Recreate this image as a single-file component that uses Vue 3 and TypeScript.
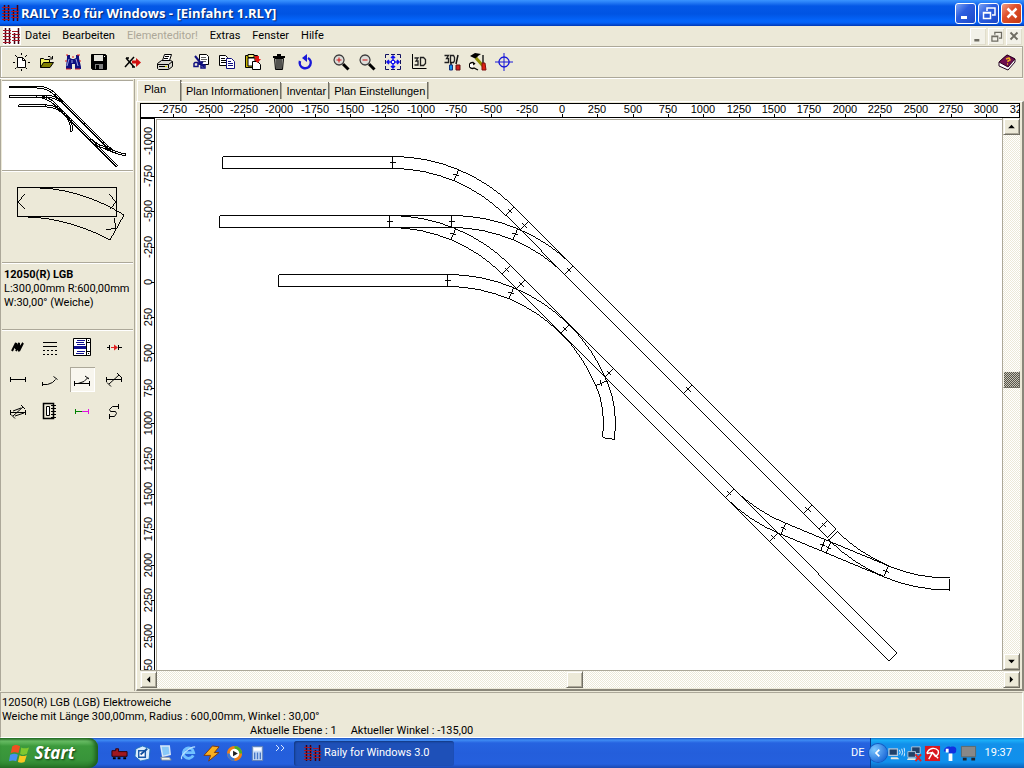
<script setup lang="ts">
import { h, ref } from 'vue'

type Shape = [d: string, fill: string, stroke?: string, width?: number]

const K = '#000000'
const N = 'none'

const glyphs: Record<string, Shape[]> = {
  rails: [
    ['M2.500 1v16M6.500 1v16M11.500 6v11M15.500 1v16', N, '#400010', 1.5],
    ['M0 3.500h8M0 6.500h8M0 9.500h8M0 12.500h8M0 15.500h8M9 7.500h8M9 10.500h8M9 13.500h8M9 4.500h6', N, '#a81828', 1],
  ],
  fresh: [
    ['M5.5 4.5h5l3 3v7h-8z', '#ffffff', K, 1],
    ['M10.5 4.5v3h3', N, K, 1],
    ['M9.5 0v2M3 2l2 2M15 2l-2 2M1 9.5h2M16 9.5h2M3 16l1.500 -1.500M15 16l-1 -1M9.500 16v2', N, K, 1],
  ],
  open: [
    ['M2.5 14.500v-9h3l1 1h5v3', '#f0f060', K, 1],
    ['M2.500 14.500l3 -5h10l-3.500 5z', '#808000', K, 1],
    ['M10 3.500h2l2 2M14.500 3v3h-3', N, K, 1],
  ],
  binoculars: [
    ['M3 2h3v3l2 1h2l2 -1v-3h3v3l2 9v2h-6v-5h-3v5h-6v-2l1 -9z', '#101080'],
    ['M2 2h2M13 2h3M1 8h2M15 8h2M2 16h5M11 16h5M8 4h2', N, '#e02020', 1],
    ['M5 6l-2 7M12 6l2 7M8 7v3', N, '#a0a8e8', 1],
  ],
  save: [
    ['M1.500 1.500h14l1 1v14h-14l-1 -1z', K, K, 1],
    ['M4 2h9v6h-9z', '#e4e4dc'],
    ['M5 11h8v5h-8z', '#808080'],
    ['M6 12h3v4h-3z', K],
    ['M14 3h1v1h-1z', '#ffffff'],
  ],
  cross: [
    ['M3 5l8 9M11 4l-9 10M3 5h3M9 14h3', N, K, 1.5],
    ['M9 9h5', N, '#d01010', 3],
    ['M13 5l5 4.500l-5 4.500z', '#d01010'],
  ],
  print: [
    ['M6.500 7.500l2 -6h7l-2 6z', '#ffffff', K, 1],
    ['M1.500 10.500l4 -3h9l2 1v5l-4 3h-10l-1 -1z', '#d8d8d0', K, 1],
    ['M1.500 11.500h11l4 -3M12.500 11.500v4M3 13.500h8', N, K, 1],
    ['M9 3.500h4M8 5.500h4', N, K, 1],
    ['M9 13h2v1h-2z', '#e0e000'],
  ],
  cut: [
    ['M7.500 1.500h7l2 2v8h-9z', '#ffffff', K, 1],
    ['M9 4.500h5M9 6.500h6M9 8.500h5', N, '#606060', 1],
    ['M3 3l9 11M11 9l-5 2', N, '#101080', 2],
    ['M3 9.500h3v4h-4v-3zM9 12h4v3h-4z', N, '#101080', 1.5],
  ],
  copy: [
    ['M1.500 2.500h6l2 2v8h-8z', '#ffffff', K, 1],
    ['M3 5.500h4M3 7.500h5M3 9.500h5', N, K, 1],
    ['M8.500 5.500h5l3 3v7h-8z', '#ffffff', '#101080', 1],
    ['M10 8.500h3M10 10.500h5M10 12.500h5', N, '#101080', 1],
  ],
  paste: [
    ['M1.500 2.500h12v12h-12z', '#c8b400', K, 1],
    ['M4 1.500h6v3h-6z', '#f4f080', K, 1],
    ['M4 5h7v8h-7z', '#ffffff', K, 1],
    ['M8.500 8.500h5l3 3v5h-8z', '#ffffff', K, 1],
    ['M10 3h5v3h2l-3.500 4l-3.500 -4h2', '#e01010'],
  ],
  trash: [
    ['M4.500 5.500h9l-1 11h-7z', '#a8a8a0', K, 1],
    ['M3 4h12M7 2h4', N, K, 2],
    ['M7 6v10M9 6v10M11 6v10', N, K, 1],
  ],
  undo: [
    ['M4 8a5.500 5.500 0 1 0 8 -3', N, '#1818d8', 2.5],
    ['M6 5l5 -4v8z', '#1818d8'],
  ],
  zoomin: [
    ['M11 11l5.500 5.500', N, K, 3],
    ['M7 2a5 5 0 1 0 .1 0z', '#dcdcd8', '#404040', 1.3],
    ['M4.500 7h5M7 4.500v5', N, '#d01010', 1],
  ],
  zoomout: [
    ['M11 11l5.500 5.500', N, K, 3],
    ['M7 2a5 5 0 1 0 .1 0z', '#dcdcd8', '#404040', 1.3],
    ['M4.500 7h5', N, '#d01010', 1],
  ],
  fit: [
    ['M1.500 5v-3.500h3.500M7 1.500h4M13 1.500h3.500v3.500M16.500 7v4M16.500 13v3.500h-3.500M11 16.500h-4M5 16.500h-3.500v-3.500M1.500 11v-4', N, '#101060', 1],
    ['M9 3v12M3 9h12M7 5l2 -2l2 2M7 13l2 2l2 -2M5 7l-2 2l2 2M13 7l2 2l-2 2', N, '#1010f0', 1.5],
    ['M7.500 7.500h3v3h-3z', '#ffffff', '#1010f0', 1],
  ],
  axes3d: [
    ['M2.500 1v14.500h14', N, K, 1],
    ['M4.500 5h3.500l-2 3h2v4h-3.500M10.500 4.500h3l2 2v4l-2 2h-3z', N, '#202020', 1.300],
  ],
  brush3d: [
    ['M1.500 2.500h4l-2 3h2v4h-4M7.500 2.500h3l1 2v3l-1 2h-3z', N, '#202020', 1.300],
    ['M8 9v5M15 2l-2 9', N, '#101010', 1.5],
    ['M6.500 12h3v5h-3z', '#1090f0', '#103080', 1],
    ['M13 12h4v5h-4z', '#d02020', '#601010', 1],
  ],
  tools: [
    ['M1 3l5 -3l6 1l-3 2l-2 3z', K],
    ['M7 5l8 9', N, '#909000', 3],
    ['M14 2v8', N, '#202020', 1.500],
    ['M13 10h3l1 7h-4z', '#e02010', '#801010', 1],
    ['M6 11a3 3 0 1 0 -1 4l4 2M4 9l1 3', N, K, 1.300],
    ['M1 11h3v3h-3z', '#ffffff'],
  ],
  target: [
    ['M9 4a5 5 0 1 0 .1 0z', N, '#1818d8', 1.3],
    ['M9 0v18M0 9h18', N, '#1818d8', 1],
  ],
  help: [
    ['M1 9l8 -7l8 4v3l-7 8l-9 -4z', '#ffffff', '#200020', 1],
    ['M1 9l8 -7l8 4l-7 8z', '#701050', '#300020', 1],
    ['M8 6l3 -1l1 2l-2 1v1M9 11h1', N, '#f0b020', 1.500],
  ],
  bold: [['M3 13l4 -8v6l3 -6v6l4 -6M7 13l3 -5v5l4 -8', N, K, 2]],
  lines: [
    ['M2 4.500h14M2 8.500h14', N, K, 1],
    ['M2 12.500h2M6 12.500h2M10 12.500h2M14 12.500h2M2 16.500h2M6 16.500h2M10 16.500h2M14 16.500h2', N, K, 1],
  ],
  list: [
    ['M0.500 0.500h17v17h-17z', '#ffffff', K, 1],
    ['M4 2.500h8M3 4.500h8M4 6.500h8M4 13.500h8M3 15.500h8', N, '#101090', 1],
    ['M1 8h12v3h-12z', '#101090'],
    ['M13.500 0.500v17M13.500 4.500h4M13.500 13.500h4', N, K, 1],
    ['M15 2h1v1h-1zM15 15h1v1h-1z', K],
  ],
  gap: [
    ['M2 9.500h3M4.500 7v5M13.500 7v5M14 9.500h3', N, K, 1],
    ['M6 9.500h5', N, '#e02020', 1],
    ['M9 6.500l4 3l-4 3z', '#e02020'],
  ],
  straight: [['M1.500 7v5M16.500 7v5M1.500 9.500h15', N, K, 1]],
  curve: [['M1.500 12v4M1.500 14.500h5l5 -2l3 -3M12.500 6.500l4 3', N, K, 1]],
  turnout: [['M1.500 11v5M16.500 11v5M1.500 13.500h15M5 13.500l6 -2l4 -4M12 6l4 3', N, K, 1]],
  crossing: [['M1.500 7v5M16.500 7v5M1.500 9.500h15M4 14l10 -9M2 12.500l4 4M12 3l4 4', N, K, 1]],
  slip: [['M1.500 8v5M16.500 8v5M1.500 10.500h15M4 14l10 -9M2 12.500l4 4M12 3l4 4M4 9l8 -3M6 14l9 -3', N, K, 1]],
  turntable: [
    ['M2.500 1.500h10v15h-10z', N, K, 1.500],
    ['M5.500 4.500h3v9h-3z', '#ffffff', K, 1],
    ['M10 3.500h5M10 6.500h5M10 9.500h5M10 12.500h5M10 15.500h5', N, K, 1],
  ],
  colored: [
    ['M2 7h1v5h-1zM3 9h6v1h-6z', '#008000'],
    ['M9 9h6v1h-6zM15 7h1v5h-1z', '#e010e0'],
  ],
  flex: [['M13.500 2v5M13.500 4.500h-6l-3 3l1 2h5l1 2l-2 3h-5M4.500 12v5', N, K, 1]],
  loco: [
    ['M1 6h4v-2h3v3h9v5h-16z', '#a01820', '#300008', 1],
    ['M2 13h3v2h-3zM7 13h3v2h-3zM13 13h3v2h-3z', K],
  ],
  outlook: [
    ['M9 1l8 3l-1 11l-9 2l-6 -5l1 -8z', '#d8ecfc', '#2070c0', 1],
    ['M5 6h7v7h-7z', '#ffffff', '#1858a8', 1.500],
    ['M7 10l7 -6', N, '#1050a0', 2],
  ],
  desk: [
    ['M4 1h9l1 9l-8 2z', '#88c8f8', '#d8e8f8', 1.5],
    ['M4 13h9l2 3h-10z', '#f4f4ec', '#8090a0', 1],
  ],
  ie: [
    ['M14 11a5.500 5.500 0 1 1 .5 -3h-9', N, '#70c0ff', 3],
    ['M2 15c-3 -3 8 -13 14 -13', N, '#b8e0ff', 1.3],
  ],
  winamp: [['M10 1l7 1l-5 6h5l-11 9l2 -6h-7z', '#f8b020', '#803808', 1]],
  media: [
    ['M9 1a8 8 0 1 0 .1 0z', '#f08018'],
    ['M9 1a8 8 0 0 1 8 8h-8z', '#48b028'],
    ['M1 9a8 8 0 0 0 8 8v-8z', '#3878d8'],
    ['M9 4a5 5 0 1 0 .1 0z', '#ffffff'],
    ['M7.500 6l5 3l-5 3z', '#202020'],
  ],
  calc: [
    ['M3.500 1.500h11v15h-11z', '#c8dcf8', '#6080b0', 1],
    ['M5 3h8v3h-8z', '#ffffff'],
    ['M6 8v7M9 8v7M12 8v7', N, '#4878c8', 1.500],
  ],
  more: [['M1 1l3 3l-3 3M6 1l3 3l-3 3', N, '#d8e8ff', 1]],
  flag: [
    ['M3 3c3 -2 5 -1 7 0l-1.500 6c-3 -1 -4 -1 -7 0z', '#f05020'],
    ['M11 4c2 1 4 1 7 0l-2 6c-3 1 -4 1 -6 0z', '#80c830'],
    ['M1 10.500c3 -1 5 -1 7 0l-1.500 6c-2 -1 -4 -1 -6.500 0z', '#4890f0'],
    ['M9.500 11c2 1 4 1 6.500 0l-2 6c-2 1 -4 1 -6 0z', '#f8c820'],
  ],
  wifi: [
    ['M1 4h9v7h-9z', '#204068', '#b0c8e0', 1.300],
    ['M3 13h7l2 2h-9z', '#e8e8e0'],
    ['M12 5q2 3 0 5M14.500 4q2 4 0 7M17 3q2 5 0 9', N, '#e0f0ff', 1],
  ],
  lan: [
    ['M6 2h9v7h-9z', '#204068', '#b0c8e0', 1],
    ['M2 7h8v6h-8z', '#204068', '#b0c8e0', 1],
    ['M2 14h8l1 2h-10z', '#e8e8e0'],
    ['M10 10l6 7M16 10l-6 7', N, '#e02020', 2],
  ],
  umbrella: [
    ['M1 1h16v16h-16z', '#d81820'],
    ['M3 9c2 -6 9 -7 12 -3c1 3 -1 5 -3 6l-3 -4l-4 7M3 9l6 -1l6 6', N, '#ffffff', 1.500],
  ],
  blob: [
    ['M2 7c0 -5 5 -6 7 -5c3 -1 7 0 6 4c0 3 -3 3 -5 3h-3v-2z', '#1030e0'],
    ['M4 4h3v4h-3zM7 9h4v8h-4z', '#ffffff'],
  ],
  pc: [
    ['M1.500 1.500h15v11h-15z', '#888888', '#606868', 1],
    ['M3 15h4M12 15h4', N, '#202830', 3],
  ],
  min: [['M4 12h6v3h-6z', 'currentColor']],
  rest: [
    ['M7 7v-3h8v7h-3', N, 'currentColor', 1.500],
    ['M3.500 8.500h7v6h-7zM3 9h8', N, 'currentColor', 1.500],
  ],
  close: [['M4.500 4.500l9 9M13.500 4.500l-9 9', N, 'currentColor', 2.500]],
  back: [['M11 4l-5 5l5 5', N, '#ffffff', 2.500]],
  up: [['M5 11h8l-4 -4z', K]],
  down: [['M5 7h8l-4 4z', K]],
  left: [['M11 5v8l-4 -4z', K]],
  right: [['M7 5v8l4 -4z', K]],
}

function Glyph(props: { name: string; size?: number }) {
  const size = props.size ?? 18
  return h(
    'svg',
    { width: size, height: size, viewBox: '0 0 18 18', 'aria-hidden': 'true' },
    glyphs[props.name].map(([d, fill, stroke, width]) =>
      h('path', { d, fill, stroke: stroke ?? 'none', 'stroke-width': width ?? 0 }),
    ),
  )
}
Glyph.props = ['name', 'size']

const menu = ['Datei', 'Bearbeiten', 'Elementeditor!', 'Extras', 'Fenster', 'Hilfe']

const toolGroups: { wide: boolean; items: [string, string][] }[] = [
  { wide: false, items: [['fresh', 'Neu'], ['open', 'Öffnen'], ['binoculars', 'Suchen'], ['save', 'Speichern']] },
  { wide: false, items: [['cross', 'Verbinden']] },
  { wide: false, items: [['print', 'Drucken']] },
  { wide: true, items: [['cut', 'Ausschneiden'], ['copy', 'Kopieren'], ['paste', 'Einfügen'], ['trash', 'Löschen'], ['undo', 'Rückgängig']] },
  { wide: true, items: [['zoomin', 'Vergrößern'], ['zoomout', 'Verkleinern'], ['fit', 'Alles zeigen'], ['axes3d', '3D']] },
  { wide: false, items: [['brush3d', '3D Farben'], ['tools', 'Werkzeuge'], ['target', 'Zentrieren']] },
]

const elements: [string, string][] = [
  ['bold', 'Mehrfach'], ['lines', 'Linien'], ['list', 'Liste'], ['gap', 'Lücke'],
  ['straight', 'Gerade'], ['curve', 'Bogen'], ['turnout', 'Weiche'], ['crossing', 'Kreuzung'],
  ['slip', 'Kreuzungsweiche'], ['turntable', 'Drehscheibe'], ['colored', 'Übergang'], ['flex', 'Flexgleis'],
]
const element = ref('turnout')

const tabs = ['Plan', 'Plan Informationen', 'Inventar', 'Plan Einstellungen']
const tab = ref('Plan')

const quick: [string, string][] = [
  ['loco', 'Lok'], ['outlook', 'Outlook'], ['desk', 'Desktop'], ['ie', 'Internet'],
  ['winamp', 'Winamp'], ['media', 'Media Player'], ['calc', 'Rechner'],
]
const tray = ['wifi', 'lan', 'umbrella', 'blob', 'pc']

/* Ruler marks: one every 250 mm */
const PX_PER_MM = 0.1414
const marks = (from: number, to: number, zero: number) => {
  const out: { value: number; at: number }[] = []
  for (let value = from; value <= to; value += 250) {
    out.push({ value, at: Math.round(zero + value * PX_PER_MM) })
  }
  return out
}
const marksX = marks(-2750, 3250, 421)
const marksY = marks(-1000, 2750, 163)

/* Track geometry: each piece starts at a point with a heading in degrees */
const HALF = 6
const R3 = 166
const R2 = 108
const f = (n: number) => n.toFixed(1)
const rad = (deg: number) => (deg * Math.PI) / 180

function joint(x: number, y: number, deg: number) {
  const c = Math.cos(rad(deg))
  const s = Math.sin(rad(deg))
  return `M${f(x - s * HALF)} ${f(y + c * HALF)}L${f(x + s * HALF)} ${f(y - c * HALF)}` +
    `M${f(x - c * 3)} ${f(y - s * 3)}L${f(x + c * 3)} ${f(y + s * 3)}`
}
function cap(x: number, y: number, deg: number) {
  const c = Math.cos(rad(deg)) * HALF
  const s = Math.sin(rad(deg)) * HALF
  return `M${f(x - s)} ${f(y + c)}L${f(x + s)} ${f(y - c)}`
}
function line(x1: number, y1: number, x2: number, y2: number) {
  const a = Math.atan2(y2 - y1, x2 - x1)
  const s = Math.sin(a) * HALF
  const c = Math.cos(a) * HALF
  return [1, -1].map(k => `M${f(x1 + s * k)} ${f(y1 - c * k)}L${f(x2 + s * k)} ${f(y2 - c * k)}`).join('')
}
function arc(x: number, y: number, deg: number, radius: number, turn: number) {
  const side = Math.sign(turn)
  const a0 = rad(deg)
  const a1 = rad(deg + turn)
  const cx = x - Math.sin(a0) * radius * side
  const cy = y + Math.cos(a0) * radius * side
  return [HALF, -HALF].map(o => {
    const r = radius + o
    const p = (a: number) => `${f(cx + Math.sin(a) * r * side)} ${f(cy - Math.cos(a) * r * side)}`
    return `M${p(a0)}A${r} ${r} 0 0 ${side > 0 ? 1 : 0} ${p(a1)}`
  }).join('')
}

const plan = [
  line(222.5, 162.5, 392.5, 162.5), cap(222.5, 162.5, 0), joint(392.5, 162.5, 0),
  arc(392.5, 162.5, 0, R3, 22.5), joint(456, 175, 22.5),
  arc(456, 175.1, 22.5, R3, 22.5), joint(510, 211, 45),
  line(510, 211, 831.7, 533.5), joint(524.5, 225.5, 45), joint(568.5, 269.7, 45),
  joint(688, 389.5, 45), joint(808, 509.5, 45), joint(823.5, 525, 45),
  cap(831.7, 533.5, 45), cap(833.5, 535.5, 45),

  line(219.5, 221.5, 451.5, 221.5), cap(219.5, 221.5, 0), joint(389.5, 221.5, 0), joint(451.5, 221.5, 0),
  arc(389.5, 221.5, 0, R3, 22.5), joint(453, 234, 22.5),
  arc(453, 234.1, 22.5, R3, 22.5), joint(506.5, 270, 45),
  arc(451.5, 221.5, 0, R3, 22.5), joint(515, 234, 22.5),
  arc(515, 234.1, 22.5, R3, 22.5),
  line(506.5, 270, 893, 657), joint(521, 284.5, 45), joint(565, 329, 45),
  joint(609, 373, 45), joint(729, 492.7, 45), joint(773, 536.7, 45), cap(893, 657, 45),

  line(278.5, 280.5, 447.5, 280.5), cap(278.5, 280.5, 0), joint(447.5, 280.5, 0),
  arc(447.5, 280.5, 0, R3, 22.5), joint(511, 293, 22.5),
  arc(511, 293.1, 22.5, R3, 22.5),

  arc(565, 329, 45, R3, 22.5), joint(601, 383, 67.5),
  arc(601.3, 382.7, 67.5, R2, 30), cap(608.7, 438.5, 97.5),

  arc(729, 492.7, 45, R3, -22.5), joint(783.3, 528.7, 22.5),
  line(783.3, 528.7, 886, 571.3), joint(822.5, 545, 22.5), joint(828.5, 547.7, 22.5),
  arc(832.5, 535.2, 45, R3, -22.5), joint(886, 571.3, 22.5),
  arc(886, 571.4, 22.5, R3, -22.5), cap(949.5, 584.5, 0),
].join('')
</script>

<template>
  <div class="desktop">
    <header class="titlebar">
      <Glyph name="rails" class="logo" />
      <h1>RAILY 3.0 für Windows - [Einfahrt 1.RLY]</h1>
      <div class="winbtns">
        <button aria-label="Minimieren"><Glyph name="min" /></button>
        <button aria-label="Wiederherstellen"><Glyph name="rest" /></button>
        <button class="red" aria-label="Schließen"><Glyph name="close" /></button>
      </div>
    </header>

    <nav class="menubar">
      <Glyph name="rails" class="logo" />
      <button v-for="m in menu" :key="m" class="item" :disabled="m === 'Elementeditor!'">{{ m }}</button>
      <div class="mdibtns">
        <button aria-label="Plan minimieren"><Glyph name="min" :size="15" /></button>
        <button aria-label="Plan wiederherstellen"><Glyph name="rest" :size="15" /></button>
        <button aria-label="Plan schließen"><Glyph name="close" :size="14" /></button>
      </div>
    </nav>

    <div class="toolbar" role="toolbar">
      <div v-for="(g, i) in toolGroups" :key="i" class="group" :class="{ wide: g.wide }">
        <button v-for="[icon, label] in g.items" :key="icon" :aria-label="label"><Glyph :name="icon" /></button>
      </div>
      <button class="help" aria-label="Hilfe"><Glyph name="help" /></button>
    </div>

    <main class="work">
      <aside class="side">
        <section class="overview">
          <svg class="fill crisp" aria-label="Übersicht">
            <g transform="translate(-28 -20) scale(0.16)">
              <path :d="plan" class="thin" />
            </g>
          </svg>
        </section>
        <section class="preview">
          <svg class="fill crisp" aria-label="Element">
            <path d="M15.500 16.500h99v29h-99z" class="ink" />
            <path d="M38 17c30 1 60 12 84 27l-14 25c-26 -14 -54 -22 -82 -23" class="fine" />
            <path d="M23 23l-7 8l7 7M107 23l7 8l-6 7M112 47l2 10l-10 2" class="fine" />
          </svg>
        </section>
        <section class="info">
          <strong>12050(R) LGB</strong>
          <span>L:300,00mm R:600,00mm</span>
          <span>W:30,00° (Weiche)</span>
        </section>
        <section class="elements">
          <button
            v-for="[icon, label] in elements"
            :key="icon"
            :aria-label="label"
            :aria-pressed="element === icon"
            :class="{ on: element === icon }"
            @click="element = icon"
          ><Glyph :name="icon" /></button>
        </section>
      </aside>

      <section class="doc">
        <div class="tabs" role="tablist">
          <button
            v-for="t in tabs"
            :key="t"
            role="tab"
            :aria-selected="tab === t"
            :class="{ on: tab === t }"
            @click="tab = t"
          >{{ t }}</button>
        </div>
        <div class="frame">
          <div class="ruler-x">
            <svg class="fill crisp">
              <g v-for="m in marksX" :key="m.value">
                <text :x="m.at" y="9" text-anchor="middle">{{ m.value }}</text>
                <path :d="`M${m.at}.5 10v3`" class="ink" />
              </g>
            </svg>
          </div>
          <div class="ruler-y">
            <svg class="fill crisp">
              <g v-for="m in marksY" :key="m.value">
                <text :transform="`translate(11 ${m.at}) rotate(-90)`" text-anchor="middle">{{ m.value }}</text>
                <path :d="`M10 ${m.at}.5h3`" class="ink" />
              </g>
            </svg>
          </div>
          <div class="canvas">
            <svg class="fill crisp" aria-label="Gleisplan">
              <path :d="plan" transform="translate(-157 -120)" class="fine" />
            </svg>
          </div>
          <div class="bar vert">
            <button aria-label="Nach oben"><Glyph name="up" :size="15" /></button>
            <i class="before"></i><b class="thumb dotted"></b><i class="after"></i>
            <button aria-label="Nach unten"><Glyph name="down" :size="15" /></button>
          </div>
          <div class="bar horz">
            <button aria-label="Nach links"><Glyph name="left" :size="15" /></button>
            <i class="before"></i><b class="thumb"></b><i class="after"></i>
            <button aria-label="Nach rechts"><Glyph name="right" :size="15" /></button>
          </div>
        </div>
      </section>
    </main>

    <footer class="status">
      <div>12050(R) LGB (LGB) Elektroweiche</div>
      <div>Weiche mit Länge 300,00mm, Radius : 600,00mm, Winkel : 30,00°</div>
      <div class="live"><span>Aktuelle Ebene : 1</span><span>Aktueller Winkel : -135,00</span></div>
    </footer>

    <div class="taskbar">
      <button class="start"><Glyph name="flag" :size="20" />Start</button>
      <div class="quick">
        <button v-for="[icon, label] in quick" :key="icon" :aria-label="label"><Glyph :name="icon" :size="17" /></button>
      </div>
      <button class="more" aria-label="Mehr"><Glyph name="more" /></button>
      <button class="task"><Glyph name="rails" />Raily for Windows 3.0</button>
      <span class="lang">DE</span>
      <div class="tray">
        <button class="round" aria-label="Ausgeblendete Symbole"><Glyph name="back" :size="12" /></button>
        <Glyph v-for="t in tray" :key="t" :name="t" :size="17" />
        <time>19:37</time>
      </div>
    </div>
  </div>
</template>

<style>
html,
body {
  margin: 0;
  background: #ece9d8;
}
</style>

<style scoped>
.desktop {
  display: flex;
  flex-direction: column;
  height: 100vh;
  overflow: hidden;
  background: #ece9d8;
  color: #000;
  font: 11px/14px Roboto, "Liberation Sans", Arial, sans-serif;
}
button {
  display: flex;
  align-items: center;
  justify-content: center;
  flex: none;
  margin: 0;
  padding: 0;
  border: 0;
  background: none;
  color: inherit;
  font: inherit;
  white-space: nowrap;
}
svg {
  flex: none;
  display: block;
}
.fill {
  width: 100%;
  height: 100%;
}
.crisp {
  shape-rendering: crispEdges;
}
.ink {
  fill: none;
  stroke: #000;
  stroke-width: 1;
}
.fine {
  fill: none;
  stroke: #000;
  stroke-width: 0.99;
}
.thin {
  fill: none;
  stroke: #000;
  stroke-width: 1;
  vector-effect: non-scaling-stroke;
}

.titlebar {
  display: flex;
  align-items: center;
  flex: none;
  height: 26px;
  padding: 0 2px;
  background: linear-gradient(#3a94ff 0, #2a82f8 2px, #0458e6 6px, #0054e3 14px, #0466fc 21px, #0560f4 23px, #0038b4 26px);
  color: #fff;
}
.titlebar h1 {
  margin: 0 0 0 1px;
  font: bold 13px/20px "Open Sans", "Noto Sans", sans-serif;
  text-shadow: 1px 1px 1px #0a246a;
}
.winbtns {
  display: flex;
  gap: 2px;
  margin-left: auto;
}
.winbtns button {
  width: 21px;
  height: 21px;
  box-sizing: border-box;
  border: 1px solid #fff;
  border-radius: 3px;
  background: linear-gradient(135deg, #7ea4f4, #2c5ee0 40%, #1c48c8);
}
.winbtns .red {
  background: linear-gradient(135deg, #f0a088, #e0502c 40%, #c43810);
}

.menubar {
  display: flex;
  align-items: center;
  flex: none;
  height: 20px;
  padding: 0 2px 0 3px;
}
.menubar .logo {
  margin-right: -2px;
  background: #fff;
}
.menubar .item {
  padding: 0 6px;
  height: 18px;
}
.menubar .item:disabled {
  color: #aca899;
}
.mdibtns {
  display: flex;
  gap: 2px;
  margin-left: auto;
  color: #6e6c62;
}
.mdibtns button {
  width: 16px;
  height: 17px;
  background: #f2f1e8;
  box-shadow: inset 1px 1px #fff, inset -1px -1px #e0ddcc;
}

.toolbar {
  display: flex;
  align-items: center;
  flex: none;
  height: 30px;
  margin: 0 1px 1px 0;
  padding: 0 2px 0 0;
  border: 1px solid #aca899;
  box-shadow: inset 1px 1px #fff, 0 1px #fff;
}
.toolbar button {
  width: 26px;
  height: 26px;
}
.group {
  display: flex;
  margin-left: 7px;
}
.group.wide {
  margin-left: 10px;
}
.toolbar .help {
  margin-left: auto;
}

.work {
  display: flex;
  flex: 1;
  min-height: 0;
}
.side {
  display: flex;
  flex-direction: column;
  flex: none;
  width: 131px;
  padding: 1px 1px 0 1px;
  margin-right: 1px;
  border-right: 1px solid #aca899;
  border-left: 1px solid #aca899;
}
.side section {
  flex: none;
  box-sizing: border-box;
  border-top: 1px solid #aca899;
}
.overview {
  height: 90px;
  background: #fff;
}
.preview {
  height: 92px;
  box-shadow: inset 0 1px #fff;
}
.info {
  display: flex;
  flex-direction: column;
  height: 67px;
  padding: 5px 0 0 2px;
  white-space: nowrap;
  box-shadow: inset 0 1px #fff;
}
.side .elements {
  display: grid;
  grid-template-columns: repeat(4, 32px);
  grid-auto-rows: 32px;
  align-content: start;
  place-items: center;
  flex: 1;
  padding-top: 1px;
  box-shadow: inset 0 1px #fff;
}
.elements button {
  width: 25px;
  height: 25px;
}
.elements .on {
  background: #f8f6ee;
  box-shadow: inset 1px 1px #aca899, inset -1px -1px #fff;
}

.doc {
  display: flex;
  flex-direction: column;
  flex: 1;
  min-width: 0;
}
.tabs {
  display: flex;
  align-items: flex-end;
  flex: none;
  height: 22px;
  padding: 0 0 0 1px;
  font-family: "Liberation Sans", Arial, sans-serif;
}
.tabs button {
  height: 17px;
  margin-bottom: 2px;
  padding: 0 2px 0 5px;
  border-right: 1px solid #716f64;
  box-shadow: 1px 0 #aca899, inset 0 1px #fff;
}
.tabs .on {
  height: 21px;
  margin-bottom: 0;
  padding: 0 14px 4px 7px;
  box-shadow: 1px 0 #aca899, inset 1px 1px #fff;
}
.frame {
  display: grid;
  grid-template-columns: 15px minmax(0, 1fr) 17px;
  grid-template-rows: 15px minmax(0, 1fr) 18px;
  flex: 1;
  min-height: 0;
  padding: 1px 2px 1px 3px;
  border: solid;
  border-width: 1px 2px 2px 1px;
  border-color: #fff #8a877a #8a877a #fff;
}
.ruler-x,
.ruler-y {
  background: #fff;
  overflow: hidden;
  font-family: "Liberation Sans", Arial, sans-serif;
}
.ruler-x {
  grid-column: 1 / 4;
  border: 1px solid #000;
}
.ruler-y {
  border: solid #000;
  border-width: 1px 1px 0;
}
.canvas {
  padding: 0;
  border: solid #aca899;
  border-width: 1px 0 0 1px;
  outline: 1px solid #fff;
  margin: 1px 0 0 1px;
  background: #fff;
  overflow: hidden;
}
.bar {
  display: flex;
  border: 0 solid #aca899;
  background: repeating-conic-gradient(#ece9d8 0 25%, #fff 0 50%) 0 0 / 2px 2px;
}
.bar.vert {
  flex-direction: column;
  box-shadow: -1px 0 #aca899;
}
.bar.horz {
  grid-column: 1 / 4;
  border-top-width: 1px;
}
.bar button,
.thumb {
  flex: none;
  box-sizing: border-box;
  width: 17px;
  height: 17px;
  background: #ece9d8;
  border: 1px solid;
  border-color: #f4f2e8 #716f64 #716f64 #f4f2e8;
  box-shadow: inset 1px 1px #fff, inset -1px -1px #aca899;
}
.thumb.dotted {
  background: repeating-conic-gradient(#55534a 0 25%, #c8c5b6 0 50%) 0 0 / 2px 2px;
  box-shadow: none;
}
.vert .before {
  flex: 237;
}
.vert .after {
  flex: 267;
}
.horz .before {
  flex: 409;
}
.horz .after {
  flex: 420;
}

.status {
  flex: none;
  height: 41px;
  margin: 1px 1px 0 0;
  padding: 3px 0 0 1px;
  border: 1px solid #aca899;
  border-bottom-color: #fff;
  border-right-color: #fff;
}
.live {
  display: flex;
  gap: 14px;
  padding-left: 248px;
}

.taskbar {
  display: flex;
  align-items: center;
  flex: none;
  height: 30px;
  background: linear-gradient(#1f50c0 0, #3f8cf4 2px, #2663e0 5px, #245edb 15px, #2560de 26px, #1c48b0 30px);
  color: #fff;
}
.start {
  gap: 5px;
  width: 98px;
  height: 30px;
  padding-right: 14px;
  box-sizing: border-box;
  border-radius: 0 9px 9px 0;
  background: linear-gradient(#2a7428 0, #6cc068 3px, #3c9a3c 8px, #38943a 22px, #2a7a2a 30px);
  box-shadow: inset -3px 0 4px #1c5c1c;
  font: italic bold 17px/24px "Open Sans", "Noto Sans", sans-serif;
  text-shadow: 1px 1px 2px #103c10;
}
.quick {
  display: flex;
  margin-left: 10px;
}
.quick button {
  width: 23px;
  height: 24px;
}
.more {
  width: 14px;
  height: 24px;
  margin-left: 8px;
}
.task {
  justify-content: flex-start;
  gap: 2px;
  width: 160px;
  height: 25px;
  margin-left: 3px;
  padding-left: 10px;
  box-sizing: border-box;
  border-radius: 3px;
  background: #1e50b8;
  box-shadow: inset 1px 1px 2px #123880;
}
.lang {
  margin-left: auto;
  padding-right: 5px;
}
.tray {
  display: flex;
  align-items: center;
  gap: 1px;
  height: 30px;
  padding-right: 12px;
  background: linear-gradient(#0c70c8 0, #1cb0f8 2px, #1290ea 6px, #1090ec 24px, #0c60b8 30px);
  box-shadow: inset 1px 0 #083c90;
}
.round {
  width: 18px;
  height: 18px;
  margin-left: -1px;
  border-radius: 9px;
  background: radial-gradient(circle at 30% 30%, #7cc8ff, #1c68d8 80%);
  box-shadow: 0 0 0 1px #1858c0;
}
.tray time {
  margin-left: 7px;
}
</style>
